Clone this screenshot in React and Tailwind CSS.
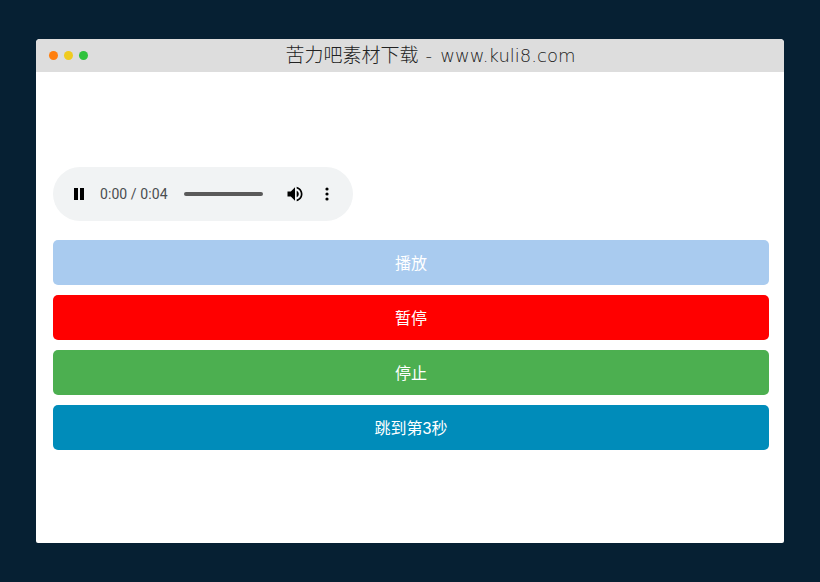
import React from 'react';

const buttons = [
    { label: '播放', className: 'bg-[#a9cbef]' },
    { label: '暂停', className: 'bg-[#ff0000]' },
    { label: '停止', className: 'bg-[#4caf50]' },
    { label: '跳到第3秒', className: 'bg-[#008cba]' },
];

const AudioBar = () => (
    <div className="w-[300px] h-[54px] rounded-[27px] bg-[#f1f3f4] flex items-center">
        <svg className="ml-[17px] w-[18px] h-[18px]" viewBox="0 0 18 18" fill="#000">
            <rect x="4" y="3" width="4" height="12" />
            <rect x="10" y="3" width="4" height="12" />
        </svg>
        <span className="ml-[12px] w-[68px] text-[14px] tracking-[0.08px] text-[#4a4d50] leading-none whitespace-nowrap font-['Roboto',sans-serif] font-normal">0:00 / 0:04</span>
        <div className="ml-[16px] w-[79px] h-[4px] rounded-full bg-[#5a5a5a]" />
        <svg className="ml-[22px] w-[20px] h-[20px]" viewBox="0 0 24 24" fill="#000">
            <path d="M3 9v6h4l5 5V4L7 9H3z" />
            <path d="M16.5 12c0-1.77-1.02-3.29-2.5-4.03v8.05c1.48-.73 2.5-2.25 2.5-4.02z" />
            <path d="M14 3.23v2.06c2.89.86 5 3.54 5 6.71s-2.11 5.85-5 6.71v2.06c4.01-.91 7-4.49 7-8.77s-2.99-7.86-7-8.77z" />
        </svg>
        <svg className="ml-[20px] w-[4px] h-[14px]" viewBox="0 0 4 14" fill="#000">
            <circle cx="2" cy="2" r="1.6" />
            <circle cx="2" cy="7" r="1.6" />
            <circle cx="2" cy="12" r="1.6" />
        </svg>
    </div>
);

const App = () => {
    return (
        <div className="w-[820px] h-[582px] bg-[#062033] pt-[39px] pl-[36px] overflow-hidden">
            <div className="w-[748px] h-[504px] bg-white rounded-t-[4px] rounded-b-[2px] overflow-hidden flex flex-col">
                <div className="relative h-[33px] bg-[#dddddd] flex items-center justify-center pl-[41px] pb-[1px]">
                    <div className="absolute left-[12.5px] top-[12px] flex gap-[6px]">
                        <span className="w-[9px] h-[9px] rounded-full bg-[#ff7f0e]" />
                        <span className="w-[9px] h-[9px] rounded-full bg-[#f0cb1f]" />
                        <span className="w-[9px] h-[9px] rounded-full bg-[#2fc23c]" />
                    </div>
                    <span className="text-[18px] leading-none text-[#222] font-extralight whitespace-pre font-['DejaVu_Sans','Noto_Sans_CJK_SC',sans-serif]">
                        <span className="text-[19px]">苦力吧素材下载</span>
                        <span className="tracking-[1.3px]"> - </span>
                        www.kuli8.com
                    </span>
                </div>
                <div className="pt-[95px] pl-[17px] pr-[15px]">
                    <AudioBar />
                    <div className="mt-[19px] flex flex-col gap-[10px]">
                        {buttons.map((b) => (
                            <button
                                key={b.label}
                                className={`h-[45px] w-full pt-[2px] rounded-[5px] text-white text-[16px] font-['Liberation_Sans','Noto_Sans_CJK_SC',sans-serif] ${b.className}`}
                            >
                                {b.label}
                            </button>
                        ))}
                    </div>
                </div>
            </div>
        </div>
    );
};

export default App;
